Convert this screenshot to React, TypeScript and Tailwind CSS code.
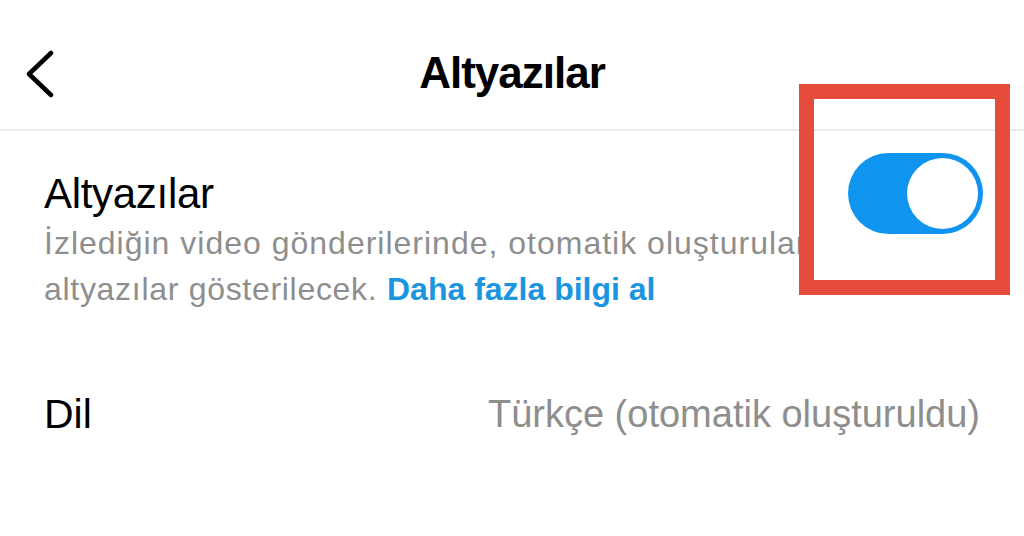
export default function App() {
  return (
    <div
      className="relative w-[1024px] h-[536px] bg-white overflow-hidden"
      style={{ fontFamily: '"Liberation Sans", Arial, sans-serif' }}
    >
      {/* header */}
      <div className="relative h-[131px] border-b-2 border-[#ececec] flex justify-center pt-[47px]">
        <button className="absolute left-[24px] top-[50px]">
          <svg width="32" height="48" viewBox="0 0 32 48" fill="none">
            <polyline
              points="27,3 5,24 27,45"
              stroke="#000"
              strokeWidth="4.5"
              strokeLinecap="round"
              strokeLinejoin="round"
            />
          </svg>
        </button>
        <h1 className="text-[44px] leading-[52px] font-bold text-black tracking-[-1px]">
          Altyazılar
        </h1>
      </div>

      {/* captions row */}
      <div className="flex items-start justify-between pl-[44px] pr-[41px] pt-[38px]">
        <div className="flex flex-col">
          <span className="text-[42px] leading-[50px] text-black tracking-[-0.3px]">Altyazılar</span>
          <p className="mt-[1px] text-[32px] leading-[46px] text-[#8e8e8e] whitespace-nowrap tracking-[0.7px]">
            <span className="tracking-[1px]">İzlediğin video gönderilerinde, otomatik oluşturulan</span>
            <br />
            altyazılar gösterilecek.{" "}
            <span className="font-bold text-[#1b95e0] tracking-[0px]">Daha fazla bilgi al</span>
          </p>
        </div>
        <div className="mt-[-16px] w-[135px] h-[81px] rounded-full bg-[#0f95f0] p-[5px] flex justify-end shrink-0">
          <div className="w-[71px] h-[71px] rounded-full bg-white" />
        </div>
      </div>

      {/* language row */}
      <div className="flex items-center justify-between pl-[44px] pr-[44px] mt-[77px]">
        <span className="text-[41px] leading-[50px] text-black">Dil</span>
        <span className="text-[38px] leading-[50px] text-[#8e8e8e]">Türkçe (otomatik oluşturuldu)</span>
      </div>

      {/* highlight box */}
      <div className="absolute left-[799px] top-[84px] w-[211px] h-[211px] border-[15px] border-[#e64c3c]" />
    </div>
  );
}
